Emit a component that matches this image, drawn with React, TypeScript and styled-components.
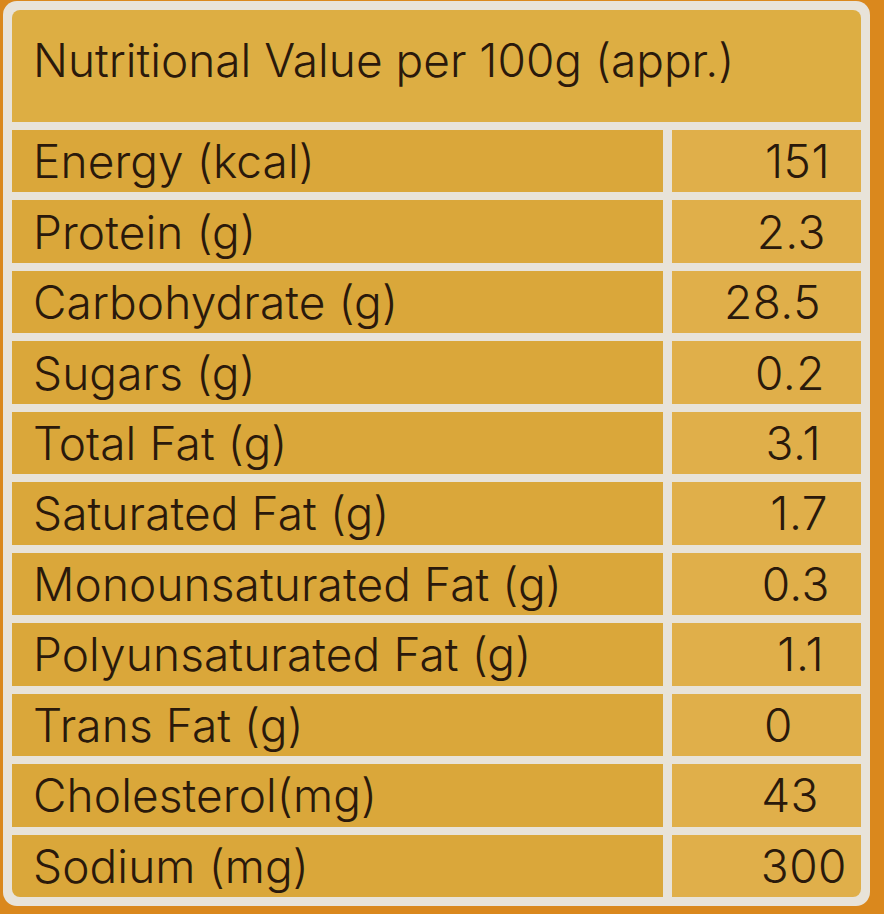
import React from "react";
import styled, { createGlobalStyle } from "styled-components";

const Global = createGlobalStyle`
  html, body { margin: 0; padding: 0; }
  body {
    background: #da881d;
    width: 884px;
    height: 914px;
    overflow: hidden;
  }
`;

const Frame = styled.div`
  box-sizing: border-box;
  margin: 1px 14px 0 3px;
  width: 867px;
  height: 905px;
  padding: 9px;
  background: #e8e3d9;
  border-radius: 14px;
  display: grid;
  grid-template-columns: 651px 189px;
  grid-template-rows: 112px repeat(11, 1fr);
  column-gap: 9px;
  row-gap: 8px;
  font-family: Inter, "Noto Sans", sans-serif;
  font-weight: 350;
  color: #2a190b;
`;

const Header = styled.div`
  grid-column: 1 / span 2;
  background: #ddae43;
  border-radius: 8px 8px 0 0;
  display: flex;
  align-items: center;
  padding: 0 0 12px 21px;
  font-size: 46px;
  letter-spacing: 0;
`;

const Label = styled.div<{ $last?: boolean }>`
  background: #daa73a;
  display: flex;
  align-items: center;
  padding-left: 21px;
  font-size: 46px;
  letter-spacing: 0.1px;
  border-radius: ${(p) => (p.$last ? "0 0 0 8px" : "0")};
`;

const Value = styled.div<{ $right: number; $last?: boolean }>`
  background: #e0af4a;
  display: flex;
  align-items: center;
  justify-content: flex-end;
  padding-right: ${(p) => p.$right}px;
  font-size: 46px;
  letter-spacing: 0.5px;
  border-radius: ${(p) => (p.$last ? "0 0 8px 0" : "0")};
`;

const rows: [string, string, number][] = [
  ["Energy (kcal)", "151", 31],
  ["Protein (g)", "2.3", 35],
  ["Carbohydrate (g)", "28.5", 40],
  ["Sugars (g)", "0.2", 36],
  ["Total Fat (g)", "3.1", 40],
  ["Saturated Fat (g)", "1.7", 33],
  ["Monounsaturated Fat (g)", "0.3", 31],
  ["Polyunsaturated Fat (g)", "1.1", 37],
  ["Trans Fat (g)", "0", 68],
  ["Cholesterol(mg)", "43", 42],
  ["Sodium (mg)", "300", 14],
];

export default function App() {
  return (
    <>
      <Global />
      <Frame>
        <Header>Nutritional Value per 100g (appr.)</Header>
        {rows.map(([label, value, right], i) => {
          const last = i === rows.length - 1;
          return (
            <React.Fragment key={label}>
              <Label $last={last}>{label}</Label>
              <Value $right={right} $last={last}>
                {value}
              </Value>
            </React.Fragment>
          );
        })}
      </Frame>
    </>
  );
}
